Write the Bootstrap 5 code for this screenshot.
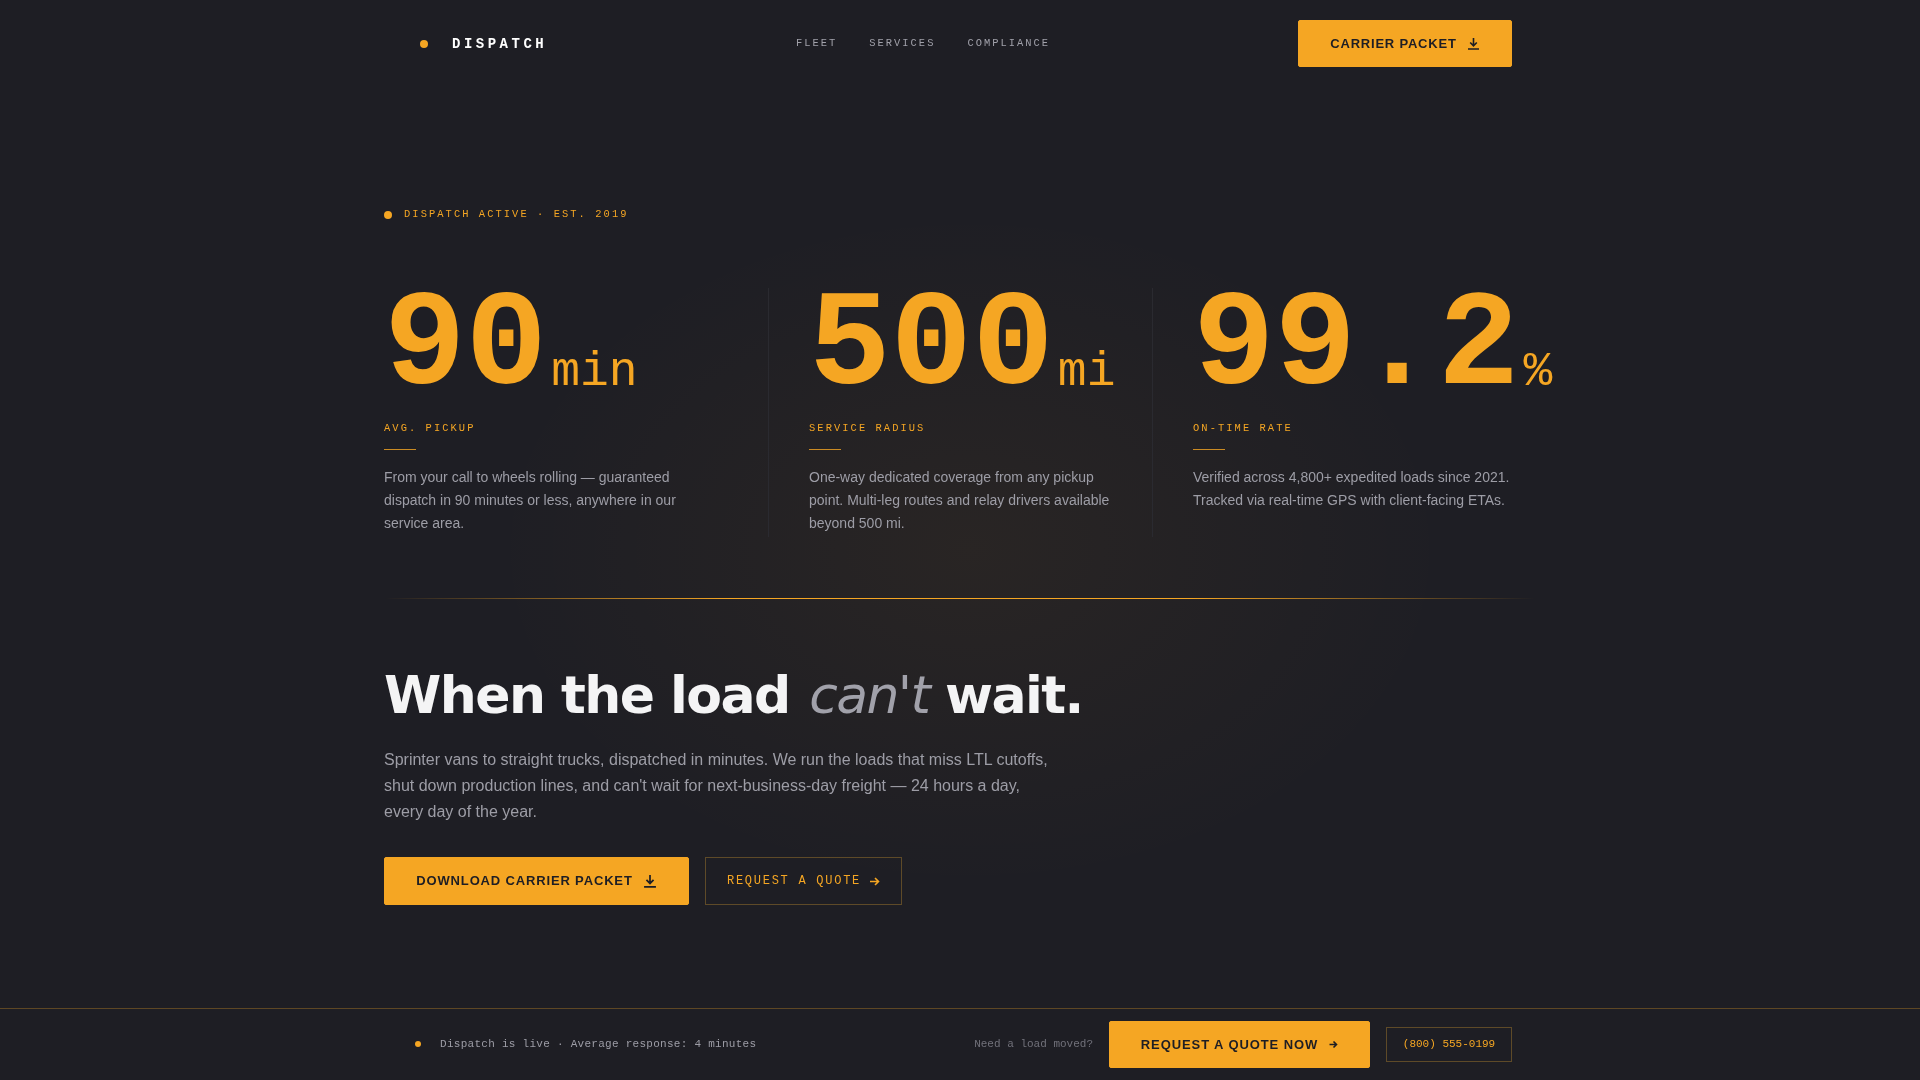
<!DOCTYPE html>
<html lang="en">
<head>
  <meta charset="UTF-8" />
  <meta name="viewport" content="width=device-width, initial-scale=1.0"/>
  <title>Dispatch</title>
  <link href="https://cdn.jsdelivr.net/npm/bootstrap@5.3.3/dist/css/bootstrap.min.css" rel="stylesheet"/>
  <style>
    body {
      background-color: #1e1e24;
      background-image: radial-gradient(ellipse 480px 340px at 970px 550px, rgba(245,166,35,.05), rgba(245,166,35,0));
      font-family: "Liberation Sans", Arial, sans-serif;
      color: #9d9da6;
    }
    header, main, footer { will-change: transform; }
    .mono { font-family: "Liberation Mono", "Courier New", monospace; }
    .amber-dot { background: #f5a623; border-radius: 50%; flex: none; }
    .topbar { width: 1200px; height: 87px; padding: 0 48px; }
    .brand-mark { padding-left: 12px; width: 140px; }
    .brand-mark .amber-dot { width: 8px; height: 8px; margin-right: 24px; margin-top: 1px; }
    .brand-name { color: #fff; font-size: 14px; font-weight: 700; letter-spacing: .25em; margin-top: 1px; }
    .top-links { gap: 32px; }
    .top-links a { color: #a1a1aa; font-size: 10.4px; letter-spacing: .195em; text-decoration: none; }
    .btn-amber {
      --bs-btn-bg: #f5a623; --bs-btn-border-color: #f5a623; --bs-btn-color: #1e1e24;
      --bs-btn-hover-bg: #f5a623; --bs-btn-hover-border-color: #f5a623; --bs-btn-hover-color: #1e1e24;
      --bs-btn-border-radius: 2px;
      font-weight: 700; font-size: 13px; letter-spacing: .06em;
      display: inline-flex; align-items: center; justify-content: center;
    }
    .btn-amber svg { margin-left: 10px; }
    .btn-top { width: 214px; height: 47px; }
    .hero-wrap { width: 1200px; padding: 0 24px; }
    .status-tag { margin-top: 122px; margin-bottom: 67px; height: 12px; }
    .status-tag .amber-dot { width: 8px; height: 8px; margin-right: 12px; margin-top: 2px; }
    .status-tag span.mono { color: #f5a623; font-size: 10.4px; letter-spacing: .2em; line-height: 12px; margin-top: -1px; }
    .stat-col { height: 249px; }
    .stat-col + .stat-col { border-left: 1px solid #2a2a30; padding-left: 40px; }
    .stat-figure { color: #f5a623; white-space: nowrap; }
    .stat-num { font-size: 136px; font-weight: 700; line-height: 119px; }
    .stat-unit { font-size: 48px; margin-left: 4px; line-height: 1; vertical-align: -2px; }
    .stat-label { color: #f5a623; font-size: 10.4px; letter-spacing: .2em; line-height: 12px; margin-top: 15px; }
    .stat-rule { width: 32px; height: 1px; background: #f5a623; opacity: .8; margin: 15px 0 16px; }
    .stat-text { font-size: 14px; line-height: 23px; margin: 0; max-width: 318px; }
    .glow-rule { height: 1px; margin-top: 61px; background: linear-gradient(90deg, rgba(245,166,35,0), #f5a623 30%, #f5a623 70%, rgba(245,166,35,0)); }
    .hero-title { font-family: "DejaVu Sans", sans-serif; font-weight: 700; font-size: 52px; line-height: 62px; letter-spacing: -.03em; color: #f4f4f5; margin: 65px 0 0; }
    .hero-title em { font-weight: 300; color: #a1a1aa; margin-left: 3px; margin-right: -1px; }
    .hero-sub { font-size: 16px; line-height: 26px; width: 670px; margin: 21px 0 0; }
    .hero-actions { margin-top: 32px; gap: 16px; }
    .btn-packet { width: 305px; height: 48px; letter-spacing: .065em; }
    .btn-outline-amber {
      --bs-btn-border-color: #5e4a28; --bs-btn-hover-border-color: #5e4a28; --bs-btn-color: #f5a623; --bs-btn-hover-color: #f5a623; --bs-btn-hover-bg: transparent;
      --bs-btn-border-radius: 0;
      font-size: 12px; letter-spacing: .145em; width: 197px; height: 48px;
      display: inline-flex; align-items: center; justify-content: center;
    }
    .btn-outline-amber svg { margin-left: 8px; }
    .live-bar { height: 72px; border-top: 1px solid #5e4724; }
    .live-inner { width: 1200px; padding: 0 48px; }
    .live-left .amber-dot { width: 6px; height: 6px; margin-left: 7px; margin-right: 19px; margin-bottom: 1px; }
    .live-left span.mono { font-size: 11px; letter-spacing: .025em; }
    .live-ask { color: #71717a; font-size: 11px; margin-right: 16px; }
    .btn-now { width: 261px; height: 47px; margin-right: 16px; letter-spacing: .07em; }
    .btn-now svg { margin-left: 11px; }
    .phone-box { border: 1px solid #5e4a28; color: #f5a623; font-size: 11px; width: 126px; height: 35px; }
  </style>
</head>
<body class="d-flex flex-column min-vh-100">

<header class="topbar mx-auto d-flex align-items-center justify-content-between">
  <div class="brand-mark d-flex align-items-center">
    <span class="amber-dot"></span>
    <span class="brand-name mono">DISPATCH</span>
  </div>
  <nav class="top-links d-flex mono">
    <a href="#">FLEET</a>
    <a href="#">SERVICES</a>
    <a href="#">COMPLIANCE</a>
  </nav>
  <a href="#" class="btn btn-amber btn-top p-0">CARRIER PACKET
    <svg width="13" height="13" viewBox="0 0 13 13" fill="none" stroke="currentColor" stroke-width="1.6"><path d="M6.5 1v7.5M3.2 5.5l3.3 3.3 3.3-3.3M1 12h11"/></svg>
  </a>
</header>

<main class="hero-wrap mx-auto">
  <div class="status-tag d-flex">
    <span class="amber-dot"></span>
    <span class="mono">DISPATCH ACTIVE · EST. 2019</span>
  </div>

  <div class="row g-0">
    <div class="col-4 stat-col">
      <div class="stat-figure mono"><span class="stat-num">90</span><span class="stat-unit">min</span></div>
      <div class="stat-label mono">AVG. PICKUP</div>
      <div class="stat-rule"></div>
      <p class="stat-text">From your call to wheels rolling — guaranteed dispatch in 90 minutes or less, anywhere in our service area.</p>
    </div>
    <div class="col-4 stat-col">
      <div class="stat-figure mono"><span class="stat-num">500</span><span class="stat-unit">mi</span></div>
      <div class="stat-label mono">SERVICE RADIUS</div>
      <div class="stat-rule"></div>
      <p class="stat-text">One-way dedicated coverage from any pickup point. Multi-leg routes and relay drivers available beyond 500 mi.</p>
    </div>
    <div class="col-4 stat-col">
      <div class="stat-figure mono"><span class="stat-num">99.2</span><span class="stat-unit">%</span></div>
      <div class="stat-label mono">ON-TIME RATE</div>
      <div class="stat-rule"></div>
      <p class="stat-text">Verified across 4,800+ expedited loads since 2021. Tracked via real-time GPS with client-facing ETAs.</p>
    </div>
  </div>

  <div class="glow-rule"></div>

  <h1 class="hero-title">When the load <em>can't</em> wait.</h1>
  <p class="hero-sub">Sprinter vans to straight trucks, dispatched in minutes. We run the loads that miss LTL cutoffs, shut down production lines, and can't wait for next-business-day freight — 24 hours a day, every day of the year.</p>

  <div class="hero-actions d-flex">
    <a href="#" class="btn btn-amber btn-packet p-0">DOWNLOAD CARRIER PACKET
      <svg width="14" height="14" viewBox="0 0 13 13" fill="none" stroke="currentColor" stroke-width="1.6"><path d="M6.5 1v7.5M3.2 5.5l3.3 3.3 3.3-3.3M1 12h11"/></svg>
    </a>
    <a href="#" class="btn btn-outline-amber mono p-0">REQUEST A QUOTE
      <svg width="11" height="11" viewBox="0 0 11 11" fill="none" stroke="currentColor" stroke-width="1.6"><path d="M1 5.5h8.5M6 2l3.5 3.5L6 9"/></svg>
    </a>
  </div>
</main>

<footer class="live-bar mt-auto">
  <div class="live-inner mx-auto h-100 d-flex align-items-center justify-content-between">
    <div class="live-left d-flex align-items-center">
      <span class="amber-dot"></span>
      <span class="mono">Dispatch is live · Average response: 4 minutes</span>
    </div>
    <div class="d-flex align-items-center">
      <span class="live-ask mono">Need a load moved?</span>
      <a href="#" class="btn btn-amber btn-now p-0">REQUEST A QUOTE NOW
        <svg width="9" height="9" viewBox="0 0 9 9" fill="none" stroke="currentColor" stroke-width="1.6"><path d="M.5 4.5h7M4.5 1.5l3 3-3 3"/></svg>
      </a>
      <span class="phone-box mono d-flex align-items-center justify-content-center">(800) 555-0199</span>
    </div>
  </div>
</footer>

<script src="https://cdn.jsdelivr.net/npm/bootstrap@5.3.3/dist/js/bootstrap.bundle.min.js"></script>
</body>
</html>
